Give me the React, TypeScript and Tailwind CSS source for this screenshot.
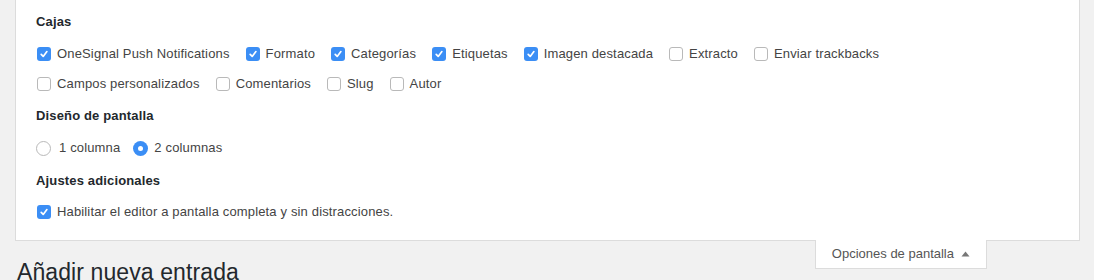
const Check = ({ checked }: { checked?: boolean }) =>
  checked ? (
    <span className="flex h-[14px] w-[14px] shrink-0 items-center justify-center rounded-[3px] bg-[#3b8ef5]">
      <svg width="10" height="10" viewBox="0 0 10 10">
        <path d="M2.2 5.3 L4.2 7.4 L7.9 2.6" stroke="white" strokeWidth="1.7" fill="none" strokeLinecap="round" strokeLinejoin="round" />
      </svg>
    </span>
  ) : (
    <span className="h-[14px] w-[14px] shrink-0 rounded-[3px] border border-[#b9b9b9] bg-white" />
  )

const Radio = ({ checked }: { checked?: boolean }) =>
  checked ? (
    <span className="flex h-[15px] w-[15px] shrink-0 items-center justify-center rounded-full bg-[#3b8ef5]">
      <span className="h-[5px] w-[5px] rounded-full bg-white" />
    </span>
  ) : (
    <span className="h-[15px] w-[15px] shrink-0 rounded-full border border-[#b9b9b9] bg-white" />
  )

const Item = ({ label, checked }: { label: string; checked?: boolean }) => (
  <label className="flex items-center gap-[6px]">
    <Check checked={checked} />
    <span>{label}</span>
  </label>
)

const row1 = [
  { label: "OneSignal Push Notifications", checked: true },
  { label: "Formato", checked: true },
  { label: "Categorías", checked: true },
  { label: "Etiquetas", checked: true },
  { label: "Imagen destacada", checked: true },
  { label: "Extracto" },
  { label: "Enviar trackbacks" },
]

const row2 = [
  { label: "Campos personalizados" },
  { label: "Comentarios" },
  { label: "Slug" },
  { label: "Autor" },
]

export default function App() {
  return (
    <div className="h-[280px] overflow-hidden bg-[#f1f1f1] font-['Liberation_Sans',Arial,sans-serif] text-[13px] tracking-[0.15px] text-[#444]">
      <div className="ml-[15px] mr-[14px] border border-t-0 border-[#dcdcdc] bg-white pb-[18px] pl-5 pt-3">
        <h5 className="h-5 font-bold leading-5 text-[#23282d]">Cajas</h5>

        <div className="mt-3 flex h-5 items-center gap-x-4 pl-px leading-5">
          {row1.map((i) => (
            <Item key={i.label} {...i} />
          ))}
        </div>
        <div className="mt-[10px] flex h-5 items-center gap-x-4 pl-px leading-5">
          {row2.map((i) => (
            <Item key={i.label} {...i} />
          ))}
        </div>

        <h5 className="mt-3 h-5 font-bold leading-5 text-[#23282d]">Diseño de pantalla</h5>
        <div className="mt-3 flex h-5 items-center gap-x-[13px] leading-5">
          <label className="flex items-center gap-[8px]">
            <Radio />
            <span>1 columna</span>
          </label>
          <label className="flex items-center gap-[6px]">
            <Radio checked />
            <span>2 columnas</span>
          </label>
        </div>

        <h5 className="mt-[13px] h-5 font-bold leading-5 text-[#23282d]">Ajustes adicionales</h5>
        <div className="mt-[11px] flex h-5 items-center pl-px leading-5">
          <Item label="Habilitar el editor a pantalla completa y sin distracciones." checked />
        </div>
      </div>

      <div className="flex items-start justify-between">
        <h1 className="ml-[17px] mt-[17px] text-[23px] font-normal leading-[29px] tracking-[0.1px] text-[#23282d]">Añadir nueva entrada</h1>
        <button className="mr-[107px] -mt-px flex h-[29px] items-center gap-[7px] border border-t-0 border-[#dcdcdc] bg-white pl-4 pr-4 tracking-normal text-[#555]">
          <span>Opciones de pantalla</span>
          <svg width="9" height="6" viewBox="0 0 9 6">
            <path d="M0.5 5.5 L4.5 0.5 L8.5 5.5 Z" fill="#777" />
          </svg>
        </button>
      </div>
    </div>
  )
}
